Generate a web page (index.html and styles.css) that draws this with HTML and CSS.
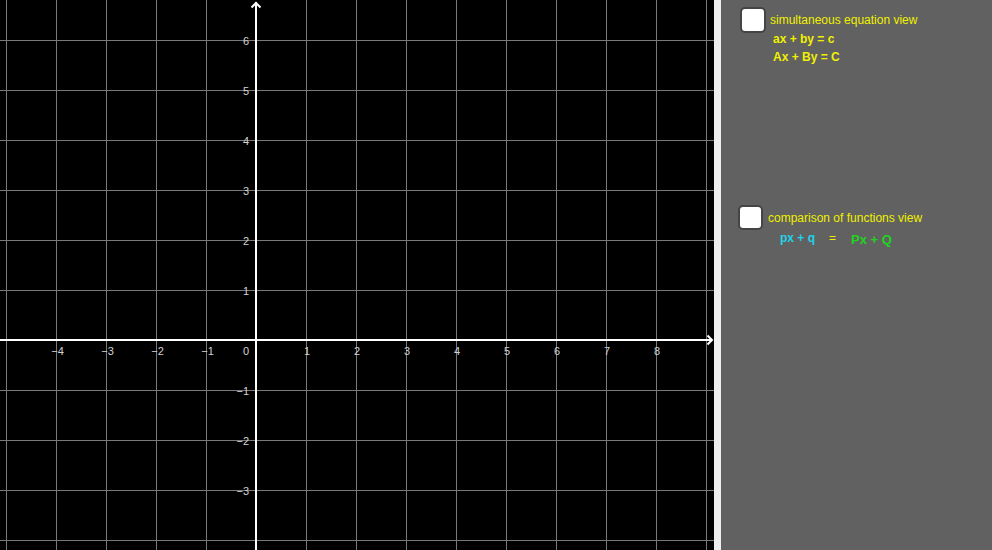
FILE: index.html
```html
<!DOCTYPE html>
<html>
<head>
<meta charset="utf-8">
<link rel="stylesheet" href="styles.css">
</head>
<body>
<div class="app">
  <div class="graphics">
    <svg class="plot" width="714" height="550" viewBox="0 0 714 550">
      <g class="grid">
        <line x1="6.5" y1="0" x2="6.5" y2="550"/>
        <line x1="56.5" y1="0" x2="56.5" y2="550"/>
        <line x1="106.5" y1="0" x2="106.5" y2="550"/>
        <line x1="156.5" y1="0" x2="156.5" y2="550"/>
        <line x1="206.5" y1="0" x2="206.5" y2="550"/>
        <line x1="306.5" y1="0" x2="306.5" y2="550"/>
        <line x1="356.5" y1="0" x2="356.5" y2="550"/>
        <line x1="406.5" y1="0" x2="406.5" y2="550"/>
        <line x1="456.5" y1="0" x2="456.5" y2="550"/>
        <line x1="506.5" y1="0" x2="506.5" y2="550"/>
        <line x1="556.5" y1="0" x2="556.5" y2="550"/>
        <line x1="606.5" y1="0" x2="606.5" y2="550"/>
        <line x1="656.5" y1="0" x2="656.5" y2="550"/>
        <line x1="706.5" y1="0" x2="706.5" y2="550"/>
        <line x1="0" y1="40.5" x2="714" y2="40.5"/>
        <line x1="0" y1="90.5" x2="714" y2="90.5"/>
        <line x1="0" y1="140.5" x2="714" y2="140.5"/>
        <line x1="0" y1="190.5" x2="714" y2="190.5"/>
        <line x1="0" y1="240.5" x2="714" y2="240.5"/>
        <line x1="0" y1="290.5" x2="714" y2="290.5"/>
        <line x1="0" y1="390.5" x2="714" y2="390.5"/>
        <line x1="0" y1="440.5" x2="714" y2="440.5"/>
        <line x1="0" y1="490.5" x2="714" y2="490.5"/>
        <line x1="0" y1="540.5" x2="714" y2="540.5"/>
      </g>
      <g class="axes">
        <line x1="256" y1="2" x2="256" y2="550"/>
        <line x1="0" y1="340" x2="712" y2="340"/>
        <polyline points="251.5,7.5 256,3 260.5,7.5"/>
        <polyline points="707.5,335.5 712,340 707.5,344.5"/>
      </g>
      <g class="ylabels">
        <text x="249" y="44.5">6</text>
        <text x="249" y="94.5">5</text>
        <text x="249" y="144.5">4</text>
        <text x="249" y="194.5">3</text>
        <text x="249" y="244.5">2</text>
        <text x="249" y="294.5">1</text>
        <text x="249" y="355">0</text>
        <text x="249" y="394.5">−1</text>
        <text x="249" y="444.5">−2</text>
        <text x="249" y="494.5">−3</text>
      </g>
      <g class="xlabels">
        <text x="57.5" y="355">−4</text>
        <text x="107.5" y="355">−3</text>
        <text x="157.5" y="355">−2</text>
        <text x="207.5" y="355">−1</text>
        <text x="307" y="355">1</text>
        <text x="357" y="355">2</text>
        <text x="407" y="355">3</text>
        <text x="457" y="355">4</text>
        <text x="507" y="355">5</text>
        <text x="557" y="355">6</text>
        <text x="607" y="355">7</text>
        <text x="657" y="355">8</text>
      </g>
    </svg>
  </div>
  <div class="divider"></div>
  <div class="panel">
    <div class="block block-sim">
      <label class="check-row">
        <span class="checkbox"></span>
        <span class="check-label">simultaneous equation view</span>
      </label>
      <div class="eq eq-sim">ax + by = c</div>
      <div class="eq eq-sim">Ax + By = C</div>
    </div>
    <div class="block block-cmp">
      <label class="check-row">
        <span class="checkbox small"></span>
        <span class="check-label">comparison of functions view</span>
      </label>
      <div class="eq-row">
        <span class="eq cyan">px + q</span>
        <span class="eq yellow eq-equals">=</span>
        <span class="eq green eq-right">Px + Q</span>
      </div>
    </div>
  </div>
</div>
</body>
</html>
```

FILE: styles.css
```css
html, body {
  margin: 0;
  padding: 0;
  background: #616161;
  overflow: hidden;
}

.app {
  display: flex;
  width: 992px;
  height: 550px;
  font-family: "Liberation Sans", Arial, sans-serif;
}

.graphics {
  width: 714px;
  height: 550px;
  background: #000;
  flex: none;
}

.plot {
  display: block;
}

.grid line {
  stroke: #7a7a7a;
  stroke-width: 1;
}

.axes line,
.axes polyline {
  stroke: #fff;
  stroke-width: 2;
  fill: none;
}

.ylabels text,
.xlabels text {
  font-family: "Liberation Sans", Arial, sans-serif;
  font-size: 11px;
  fill: #d2d2d2;
}

.ylabels text {
  text-anchor: end;
}

.xlabels text {
  text-anchor: middle;
}

.divider {
  width: 7px;
  flex: none;
  background: #efefef;
}

.panel {
  flex: 1;
  background: #616161;
  display: flex;
  flex-direction: column;
  padding: 7px 0 0 17px;
}

.block-sim {
  margin-left: 2px;
}

.block-cmp {
  margin-top: 139px;
}

.check-row {
  display: flex;
  align-items: center;
  gap: 4px;
}

.checkbox {
  width: 22px;
  height: 22px;
  border: 2px solid #454545;
  border-radius: 5px;
  background: #fff;
  flex: none;
}

.checkbox.small {
  width: 21px;
  height: 21px;
}

.check-label {
  font-size: 12px;
  color: #f0f000;
}

.block-cmp .check-label {
  margin-left: 1px;
}

.eq {
  font-size: 12px;
  font-weight: bold;
  line-height: 18px;
}

.eq-sim {
  color: #f0f000;
  margin-left: 33px;
}

.block-sim .eq-sim:first-of-type {
  margin-top: -3px;
}

.eq-row {
  display: flex;
  align-items: flex-start;
  margin-left: 42px;
  margin-top: -1px;
}

.cyan {
  color: #22d2e8;
}

.yellow {
  color: #f0f000;
}

.green {
  color: #1fd41f;
}

.eq-equals {
  margin-left: 14px;
  font-weight: normal;
}

.eq-right {
  margin-left: 15px;
  margin-top: 2px;
  font-size: 13px;
}
```
